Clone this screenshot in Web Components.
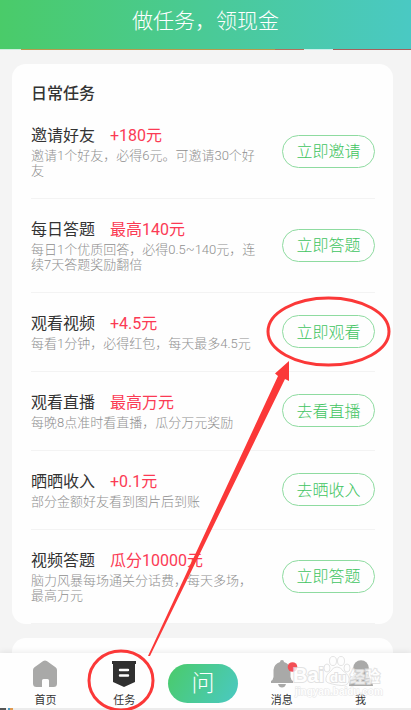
<!DOCTYPE html>
<html lang="zh-CN">
<head>
<meta charset="utf-8">
<meta name="viewport" content="width=device-width, initial-scale=1">
<title>做任务，领现金</title>
<style>
html, body { margin: 0; height: 100%; }
body { background: #f4f4f4; color: #333; font-family: Roboto, "Noto Sans CJK SC", sans-serif; font-weight: 300; }
</style>
</head>
<body>
<task-app>
  <page-header slot="header">做任务，领现金</page-header>
  <task-card heading="日常任务">
    <task-row name="邀请好友" reward="+180元" action="立即邀请">邀请1个好友，必得6元。可邀请30个好友</task-row>
    <task-row name="每日答题" reward="最高140元" action="立即答题">每日1个优质回答，必得0.5~140元，连续7天答题奖励翻倍</task-row>
    <task-row name="观看视频" reward="+4.5元" action="立即观看">每看1分钟，必得红包，每天最多4.5元</task-row>
    <task-row name="观看直播" reward="最高万元" action="去看直播">每晚8点准时看直播，瓜分万元奖励</task-row>
    <task-row name="晒晒收入" reward="+0.1元" action="去晒收入">部分金额好友看到图片后到账</task-row>
    <task-row name="视频答题" reward="瓜分10000元" action="立即答题">脑力风暴每场通关分话费，每天多场，最高万元</task-row>
  </task-card>
  <task-card></task-card>
  <tab-bar slot="footer">
    <tab-item label="首页">
      <svg width="26" height="28" viewBox="0 0 26 28" aria-hidden="true"><path fill="#a9a9a8" d="M11.2 1.1Q13 0 14.8 1.1L23.5 7.2Q25 8.3 25 10V23.5Q25 27 21.5 27H17V20.5Q17 19 15.5 19H11.5Q10 19 10 20.5V27H4.500Q1 27 1 23.500V10Q1 8.300 2.500 7.200Z"/></svg>
    </tab-item>
    <tab-item label="任务">
      <svg width="26" height="28" viewBox="0 0 26 28" aria-hidden="true"><path fill="#303030" d="M1 1H25V4H24V22L13 27 2 22V4H1Z"/><path stroke="#fff" stroke-width="2.400" stroke-linecap="round" d="M9 10H17M9 15.500H17"/></svg>
    </tab-item>
    <ask-button>问</ask-button>
    <tab-item label="消息">
      <svg width="26" height="28" viewBox="0 0 26 28" overflow="visible" aria-hidden="true"><path fill="#a9a9a8" d="M11 2Q11 0 13 0T15 2Q21 4 21.500 10V17Q22 20 24 21V23H2V21Q4 20 4.500 17V10Q5 4 11 2ZM9 24H17Q16 27.500 13 27.500T9 24Z"/><circle cx="23.500" cy="7" r="4.800" fill="#f34f55"/></svg>
    </tab-item>
    <tab-item label="我">
      <svg width="26" height="28" viewBox="0 0 26 28" aria-hidden="true"><circle cx="13" cy="8" r="7.800" fill="#a9a9a8"/><path fill="#a9a9a8" d="M6 14H20L24 21 25 26H1L2 21Z"/></svg>
    </tab-item>
  </tab-bar>
  <mark-overlay slot="overlay"></mark-overlay>
</task-app>

<script>
class Base extends HTMLElement {
  connectedCallback() {
    if (!this.shadowRoot) this.attachShadow({ mode: "open" }).innerHTML = this.render();
  }
  attr(name) { return this.getAttribute(name) || ""; }
}

customElements.define("task-app", class extends Base {
  render() {
    return `<style>
      :host { display: flex; flex-direction: column; height: 100vh; position: relative; overflow: hidden; }
      main { flex: 1; min-height: 0; overflow: hidden; padding: 14px 18px 0 12px; display: flex; flex-direction: column; gap: 14px; }
    </style>
    <slot name="header"></slot>
    <main><slot></slot></main>
    <slot name="footer"></slot>
    <slot name="overlay"></slot>`;
  }
});

customElements.define("page-header", class extends Base {
  render() {
    return `<style>
      :host { display: block; }
      h1 { margin: 0; padding: 5px 0 12px; background: linear-gradient(90deg, #4acb69, #4ac9c3); font-size: 21px; line-height: 32px; font-weight: 300; color: #fff; text-align: center; }
      .strip { height: 1px; background: linear-gradient(90deg, #cfeedd 5%, #b99a4c 5% 67%, #b5705c 67% 74%, #cdeeea 74% 81%, #a85f5c 81%); }
    </style><h1><slot></slot></h1><div class="strip"></div>`;
  }
});

customElements.define("task-card", class extends Base {
  render() {
    const heading = this.attr("heading");
    return `<style>
      :host { display: block; flex: none; background: #fefefe; border-radius: 14px; padding: 18px 18px 0 19px; min-height: 40px; }
      h2 { margin: 0; font-size: 16px; line-height: 23px; font-weight: 500; }
    </style>${heading ? `<h2>${heading}</h2>` : ""}<slot></slot>`;
  }
});

customElements.define("task-row", class extends Base {
  render() {
    return `<style>
      :host { display: flex; align-items: center; justify-content: space-between; padding: 19px 0 20px; border-bottom: 1px solid #f3f3f3; }
      .text { width: 232px; }
      h3 { margin: 0; display: flex; gap: 15px; font-size: 16px; line-height: 24px; font-weight: 400; color: #333; }
      .reward { color: #fb3a54; }
      p { margin: 0; font-size: 13px; line-height: 15px; color: #8f8f8f; }
      button { flex: none; box-sizing: border-box; width: 93px; height: 33px; padding: 0 0 2px; border: 1px solid #8edba0; border-radius: 17px; background: none; color: #3fc460; font: inherit; font-size: 16px; }
    </style>
    <div class="text">
      <h3><span>${this.attr("name")}</span><span class="reward">${this.attr("reward")}</span></h3>
      <p><slot></slot></p>
    </div>
    <button type="button">${this.attr("action")}</button>`;
  }
});

customElements.define("tab-bar", class extends Base {
  render() {
    return `<style>
      :host { display: block; background: #fefefe; box-shadow: 0 -1px 6px rgba(0,0,0,.08); }
      nav { display: grid; grid-template-columns: repeat(5, 1fr); height: 55px; padding: 0 11px 0 6px; }
      .edge { height: 2px; background: linear-gradient(90deg, #555 6px, #ececec 6px 8px, #4a9bc4 8px 10px, #e09a50 10px 13px, #ececec 13px); }
    </style><nav><slot></slot></nav><div class="edge"></div>`;
  }
});

customElements.define("tab-item", class extends Base {
  render() {
    return `<style>
      :host { display: flex; justify-content: center; }
      a { display: flex; flex-direction: column; align-items: center; padding-top: 7px; gap: 6px; font-size: 11px; line-height: 14px; font-weight: 400; color: #333; text-decoration: none; }
      ::slotted(svg) { display: block; }
    </style><a href="#"><slot></slot><span>${this.attr("label")}</span></a>`;
  }
});

customElements.define("ask-button", class extends Base {
  render() {
    return `<style>
      :host { display: flex; justify-content: center; align-items: center; padding-top: 6px; }
      button { width: 70px; height: 39px; padding: 0; border: 0; border-radius: 20px; background: linear-gradient(120deg, #4acb69, #4ac9c3); color: #fff; font: inherit; font-size: 23px; line-height: 39px; }
    </style><button type="button"><slot></slot></button>`;
  }
});

customElements.define("mark-overlay", class extends Base {
  render() {
    return `<style>
      :host { position: absolute; inset: 0; pointer-events: none; }
      svg { display: block; width: 100%; height: 100%; }
      text { font-family: "Liberation Sans", "Noto Sans CJK SC", sans-serif; font-weight: 700; fill: #fff; stroke: #dcdcdc; stroke-width: 2; paint-order: stroke; }
      .url { fill: #fff; stroke: #e0e0e0; stroke-width: 1; }
    </style>
    <svg viewBox="0 0 411 710" aria-hidden="true">
      <g opacity=".8">
        <text x="293" y="682" font-size="20">Bai</text>
        <g fill="#fff" stroke="#dedede">
          <ellipse cx="327" cy="668" rx="3" ry="4"/><ellipse cx="333" cy="661" rx="3.500" ry="4.500"/>
          <ellipse cx="341" cy="661" rx="3.500" ry="4.500"/><ellipse cx="347" cy="668" rx="3" ry="4"/>
          <path d="M337 667Q341 667 343 671Q350 675 349 681T337 685T326 681Q325 675 331 671Q333 667 337 667Z"/>
        </g>
        <text x="330" y="682" font-size="13">du</text>
        <text x="350" y="682" font-size="15">经验</text>
        <text class="url" x="295" y="695" font-size="10">jingyan.baidu.com</text>
      </g>
      <g fill="none" stroke="#fb3838" stroke-width="3">
        <ellipse cx="328.500" cy="331.500" rx="60.500" ry="33.500"/>
        <ellipse cx="121" cy="680.500" rx="32" ry="29.500"/>
      </g>
      <path fill="#fb3838" d="M148 656L278 376 275 373.500 289 361V381L285 379 150 656Z"/>
    </svg>`;
  }
});
</script>
</body>
</html>
